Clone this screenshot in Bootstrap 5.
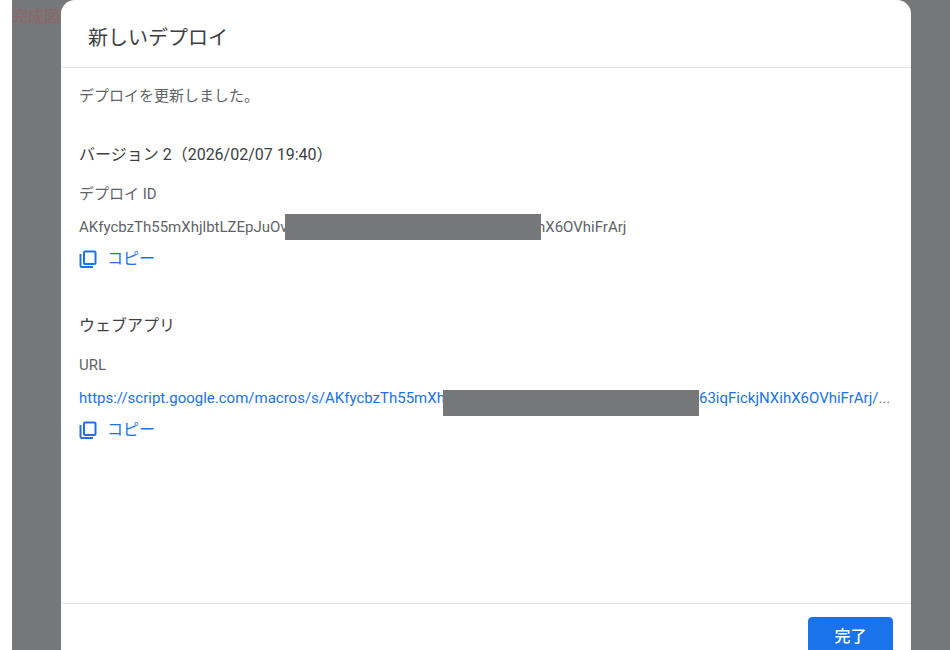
<!DOCTYPE html>
<html lang="ja">
<head>
    <meta charset="UTF-8">
    <meta name="viewport" content="width=device-width, initial-scale=1.0">
    <title>新しいデプロイ</title>
    <link href="https://cdn.jsdelivr.net/npm/bootstrap@5.3.2/dist/css/bootstrap.min.css" rel="stylesheet">
    <style>
        html, body {
            height: 650px;
            overflow: hidden;
        }
        body {
            background: #fff;
            padding-left: 12px;
            font-family: Roboto, "Noto Sans CJK JP", sans-serif;
            font-size: 15px;
            color: #5f6368;
        }
        .backdrop {
            height: 650px;
            background: #767778;
        }
        .bg-label {
            width: 49px;
            padding-top: 7px;
            font-size: 16px;
            line-height: 20px;
            color: #8f666a;
            white-space: nowrap;
        }
        .deploy-dialog {
            width: 850px;
            height: 650px;
            flex: none;
            border: 0;
            background: #fff;
            border-radius: 14px 14px 0 0;
            overflow: hidden;
        }
        .deploy-dialog .modal-header {
            height: 68px;
            padding: 0 0 0 27px;
            border-bottom: 1px solid #e4e5e7;
        }
        .deploy-dialog .modal-title {
            font-size: 20px;
            font-weight: 400;
            line-height: 28px;
            color: #3c4043;
            margin-top: 9px;
        }
        .deploy-dialog .modal-body {
            padding: 0 18px;
            flex: none;
            height: 535px;
        }
        .deploy-dialog .modal-footer {
            padding: 13px 18px 0 0;
            border-top: 1px solid #e4e5e7;
            display: block;
            height: 80px;
        }
        .intro-line {
            height: 20px;
            margin-top: 18px;
            line-height: 20px;
        }
        .section-title {
            height: 20px;
            line-height: 20px;
            font-size: 16px;
            color: #3c4043;
        }
        .first-section { margin-top: 39px; }
        .second-section { margin-top: 47px; }
        .field-label {
            height: 20px;
            line-height: 20px;
            margin-top: 19px;
        }
        .field-value {
            height: 26px;
            margin-top: 10px;
            white-space: nowrap;
        }
        .field-value.url-value { color: #1a73e8; }
        .value-start { flex: none; }
        .id-start { width: 206px; }
        .url-start { width: 364px; }
        .value-end { margin-left: -4px; }
        .redacted {
            height: 26px;
            width: 256px;
            flex: none;
            background: #767778;
            position: relative;
            z-index: 1;
        }
        .url-value .redacted {
            align-self: flex-start;
            margin-top: 5px;
        }
        .copy-link {
            height: 20px;
            margin-top: 9px;
            color: #1a73e8;
            text-decoration: none;
            font-size: 16px;
            gap: 10px;
        }
        .done-btn {
            width: 85px;
            height: 40px;
            padding: 0 0 1px;
            background: #1a73e8;
            border-color: #1a73e8;
            font-size: 16px;
            font-weight: 500;
            border-radius: 4px;
        }
    </style>
</head>
<body>
    <div class="backdrop d-flex">
        <div class="bg-label">完成図</div>
        <div class="modal-content deploy-dialog">
            <div class="modal-header">
                <h5 class="modal-title">新しいデプロイ</h5>
            </div>
            <div class="modal-body">
                <div class="intro-line">デプロイを更新しました。</div>

                <div class="section-title first-section">バージョン 2（2026/02/07 19:40）</div>
                <div class="field-label">デプロイ ID</div>
                <div class="field-value d-flex align-items-center">
                    <span class="value-start id-start">AKfycbzTh55mXhjlbtLZEpJuOv</span>
                    <span class="redacted"></span>
                    <span class="value-end">hX6OVhiFrArj</span>
                </div>
                <a href="#" class="copy-link d-flex align-items-center">
                    <svg width="18" height="18" viewBox="0 0 18 18" fill="none" stroke="#1a73e8" stroke-width="2"><rect x="5" y="1.5" width="11.5" height="12.5" rx="1"/><path d="M1.5 4v11.5a1.5 1.5 0 0 0 1.5 1.5h11"/></svg>
                    <span>コピー</span>
                </a>

                <div class="section-title second-section">ウェブアプリ</div>
                <div class="field-label">URL</div>
                <div class="field-value url-value d-flex align-items-center">
                    <span class="value-start url-start">https://script.google.com/macros/s/AKfycbzTh55mXh</span>
                    <span class="redacted"></span>
                    <span>63iqFickjNXihX6OVhiFrArj/<span class="text-secondary">...</span></span>
                </div>
                <a href="#" class="copy-link d-flex align-items-center">
                    <svg width="18" height="18" viewBox="0 0 18 18" fill="none" stroke="#1a73e8" stroke-width="2"><rect x="5" y="1.5" width="11.5" height="12.5" rx="1"/><path d="M1.5 4v11.5a1.5 1.5 0 0 0 1.5 1.5h11"/></svg>
                    <span>コピー</span>
                </a>
            </div>
            <div class="modal-footer">
                <div class="d-flex justify-content-end">
                    <button type="button" class="btn btn-primary done-btn">完了</button>
                </div>
            </div>
        </div>
    </div>
    <script src="https://cdn.jsdelivr.net/npm/bootstrap@5.3.2/dist/js/bootstrap.bundle.min.js"></script>
</body>
</html>
